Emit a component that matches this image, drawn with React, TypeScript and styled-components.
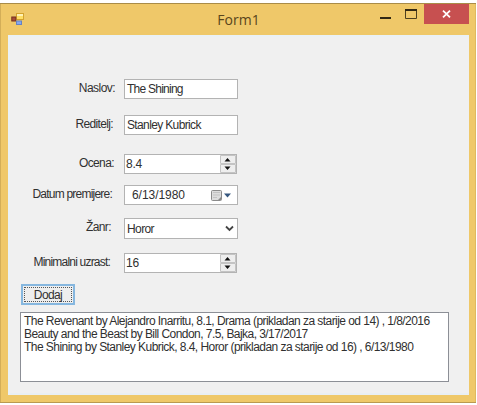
import React from "react";
import styled, { createGlobalStyle } from "styled-components";

const Global = createGlobalStyle`
  * { box-sizing: border-box; }
  body { margin: 0; background: #fff; overflow: hidden; }
`;

const Window = styled.div`
  width: 476px;
  height: 400px;
  margin-top: 3px;
  padding: 0 7px 7px 8px;
  background: #efc869;
  border-top: 1px solid #a98c48;
  border-bottom: 1px solid #b99a50;
  box-shadow: inset 1px 0 #d3ae58, inset -1px 0 #dfb95f;
  font-family: "Liberation Sans", Arial, sans-serif;
  font-size: 12px;
  color: #303030;
  display: flex;
  flex-direction: column;
`;

const TitleBar = styled.header`
  height: 31px;
  flex: none;
  display: grid;
  grid-template-columns: 100px 1fr 100px;
`;

const AppIcon = styled.svg`
  width: 14px;
  height: 14px;
  margin: 8px 0 0 3px;
`;

const Title = styled.h1`
  margin: 0;
  padding: 6px 0 0 0;
  text-align: center;
  font: 400 14px/19px "Open Sans", "Noto Sans", sans-serif;
  color: #59451c;
`;

const WindowButtons = styled.div`
  display: flex;
  justify-content: flex-end;
`;

const MinMax = styled.svg`
  width: 43px;
  height: 20px;
  margin-right: 7px;
`;

const Close = styled.button`
  width: 45px;
  height: 20px;
  padding: 0;
  border: 0;
  background: #c75050;
  display: grid;
  place-items: center;
`;

const Client = styled.main`
  flex: 1;
  min-height: 0;
  background: #f0f0f0;
  box-shadow: inset 0 2px #eaf1f5, inset 2px 0 #eaf1f5, inset 0 -2px #e9eff3;
  padding: 44px 0 0 12px;
`;

const Fields = styled.form`
  display: grid;
  grid-template-columns: 96px 114px;
  grid-template-rows: 36px 39px 31px 33px 35px 31px;
  column-gap: 8px;
`;

const Text = styled.span<{ $track?: number }>`
  white-space: pre;
  letter-spacing: ${(p) => p.$track ?? 0}px;
`;

const Label = styled.label<{ $inset: number }>`
  height: 18px;
  line-height: 18px;
  padding-right: ${(p) => p.$inset}px;
  text-align: right;
`;

const Input = styled.div<{ $width?: number; $height?: number; $pad?: number }>`
  width: ${(p) => p.$width ?? 114}px;
  height: ${(p) => p.$height ?? 20}px;
  padding-left: ${(p) => p.$pad ?? 2}px;
  background: #fff;
  border: 1px solid #b3b3b3;
  display: flex;
  align-items: center;
  justify-content: space-between;
`;

const Spinner = styled.svg`
  width: 16px;
  height: 18px;
`;

const DateIcon = styled.svg`
  width: 24px;
  height: 16px;
  margin-right: 3px;
`;

const Chevron = styled.svg`
  width: 9px;
  height: 7px;
  margin-right: 3px;
`;

const AddButton = styled.button`
  display: block;
  width: 54px;
  height: 21px;
  margin-left: 1px;
  padding: 1px;
  background: #eeeeee;
  border: 2px solid #86b7df;
  font: inherit;
  color: inherit;
`;

const Focus = styled.span`
  display: block;
  height: 15px;
  line-height: 14px;
  border: 1px dotted #555;
`;

const List = styled.ul`
  width: 429px;
  height: 70px;
  margin: 7px 0 0;
  padding: 2px 0 0 3px;
  list-style: none;
  background: #fff;
  border: 1px solid #8c8f96;
`;

const Item = styled.li`
  height: 13px;
  line-height: 13px;
`;

const UpDown = () => (
  <Spinner viewBox="0 0 16 18">
    <path d="M.5 .5h15v8H.5zM.5 9.5h15v8H.5z" fill="#eee" stroke="#c4c4c4" />
    <path d="M4.5 6.5h6L7.5 3zM4.5 11.5h6L7.5 15z" fill="#111" />
  </Spinner>
);

const movies = [
  "The Revenant by Alejandro Inarritu, 8.1, Drama (prikladan za starije od 14) , 1/8/2016",
  "Beauty and the Beast by Bill Condon, 7.5, Bajka, 3/17/2017",
  "The Shining by Stanley Kubrick, 8.4, Horor (prikladan za starije od 16) , 6/13/1980",
];

export default function App() {
  return (
    <>
      <Global />
      <Window>
        <TitleBar>
          <AppIcon viewBox="0 0 14 14">
            <rect x="5.5" y="1.5" width="7" height="6" fill="#ffdf66" stroke="#d4a32e" />
            <path d="M6 2h6v2H6z" fill="#fff2b5" />
            <rect x=".8" y="5" width="4" height="4" fill="#a74b38" stroke="#753020" />
            <rect x="5.5" y="9" width="5" height="3.5" fill="#85a6ef" stroke="#6682c0" />
          </AppIcon>
          <Title>Form1</Title>
          <WindowButtons>
            <MinMax viewBox="0 0 43 20">
              <path d="M6 13h11v2H6z" fill="#332914" />
              <path d="M31.5 5.5h11v9h-11z" fill="none" stroke="#4d401f" />
              <path d="M31 5h12v2H31z" fill="#332914" />
            </MinMax>
            <Close aria-label="Close">
              <svg width="9" height="8" viewBox="0 0 9 8">
                <path d="M1 .7l7 6.6M8 .7L1 7.3" stroke="#fff" strokeWidth="1.8" />
              </svg>
            </Close>
          </WindowButtons>
        </TitleBar>
        <Client>
          <Fields>
            <Label $inset={1}><Text $track={-0.55}>Naslov:</Text></Label>
            <Input><Text $track={-0.75}>The Shining</Text></Input>
            <Label $inset={3}><Text $track={-0.65}>Reditelj:</Text></Label>
            <Input><Text $track={-0.64}>Stanley Kubrick</Text></Input>
            <Label $inset={2}><Text $track={-0.6}>Ocena:</Text></Label>
            <Input $width={113} $pad={1}><Text $track={-0.2}>8.4</Text><UpDown /></Input>
            <Label $inset={4}><Text $track={-0.78}>Datum premijere:</Text></Label>
            <Input $pad={7}>
              <Text $track={-0.05}>6/13/1980</Text>
              <DateIcon viewBox="0 0 24 16">
                <rect x="1.5" y="3.5" width="10" height="10" rx="1" fill="#ddd" stroke="#8b8b8b" />
                <path d="M3 5.5h7M3 8h7M3 10.5h4" stroke="#c3c3c3" />
                <path d="M8 13l3-3v3z" fill="#888" />
                <path d="M14 6.5h7l-3.5 4z" fill="#36577f" />
              </DateIcon>
            </Input>
            <Label $inset={5}><Text $track={-0.6}>Žanr:</Text></Label>
            <Input $height={21}>
              <Text $track={-0.6}>Horor</Text>
              <Chevron viewBox="0 0 9 7"><path d="M1 1.5l3.5 3.5L8 1.5" fill="none" stroke="#444" strokeWidth="1.8" /></Chevron>
            </Input>
            <Label $inset={6}><Text $track={-0.8}>Minimalni uzrast:</Text></Label>
            <Input $width={113} $pad={1}><Text $track={-0.2}>16</Text><UpDown /></Input>
          </Fields>
          <AddButton><Focus><Text $track={-0.6}>Dodaj</Text></Focus></AddButton>
          <List>
            {movies.map((movie) => (
              <Item key={movie}><Text $track={-0.55}>{movie}</Text></Item>
            ))}
          </List>
        </Client>
      </Window>
    </>
  );
}
